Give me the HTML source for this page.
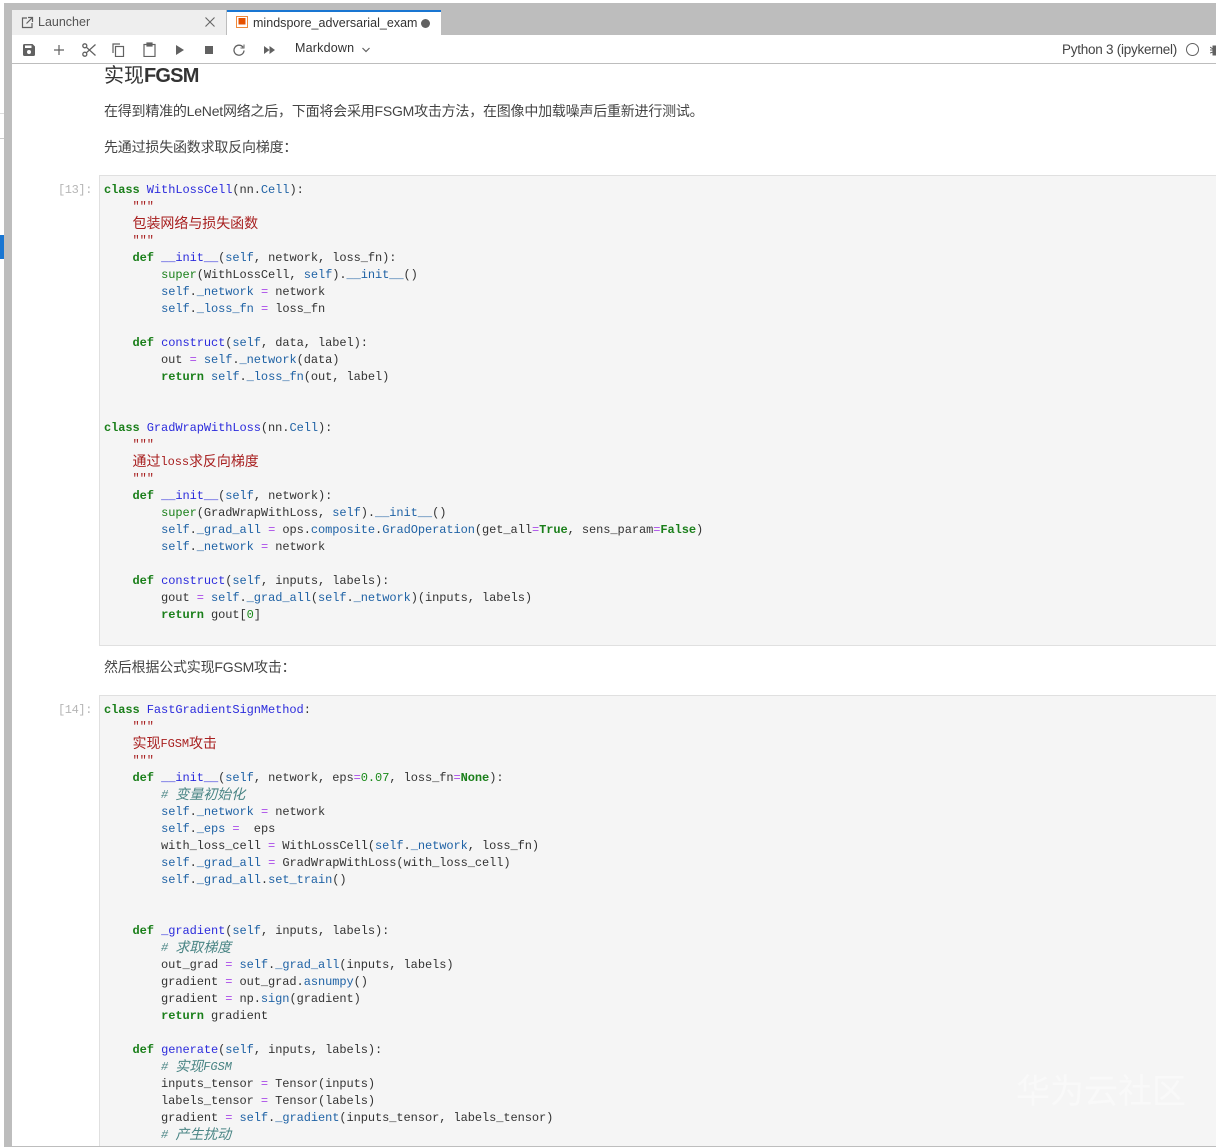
<!DOCTYPE html>
<html><head><meta charset="utf-8"><style>
html,body{margin:0;padding:0;background:#fff}
body{width:1216px;height:1147px;position:relative;overflow:hidden;font-family:"Liberation Sans","Noto Sans CJK SC",sans-serif}
.a{position:absolute}
.code{position:absolute;left:99px;width:1117px;box-sizing:border-box;background:#f5f5f5;border:1px solid #e0e0e0;border-right:0}
.l{position:absolute;left:104px;height:17px;line-height:17px;white-space:pre;font-family:"Liberation Mono","Noto Sans CJK SC",monospace;font-size:12px;letter-spacing:-.07px;color:#333}
.k{color:#1a7f1a;font-weight:bold}.d{color:#2b2bdc}.v{color:#1f62a5}.o{color:#a94be8}.s{color:#a82020}.c{color:#4a8585;font-style:italic}.n{color:#1a8a1a}.b{color:#1a801a}
.z{font-size:14px;letter-spacing:-.05px;position:relative;top:1px}
.p{position:absolute;left:104px;font-size:14px;line-height:20px;color:#444;white-space:pre}
.pr{position:absolute;left:58px;font-family:"Liberation Mono",monospace;font-size:12px;line-height:17px;color:#b5b5b5;letter-spacing:-.4px}
svg{position:absolute}
</style></head><body>
<div class="a" style="left:4px;top:3px;width:1212px;height:32px;background:#bdbdbd"></div>
<div class="a" style="left:4px;top:3px;width:8px;height:1144px;background:#bdbdbd"></div>
<div class="a" style="left:4px;top:1146px;width:1212px;height:1px;background:#bdbdbd"></div>
<div class="a" style="left:0;top:235px;width:4px;height:24px;background:#1976d2"></div>
<div class="a" style="left:0;top:113px;width:4px;height:1px;background:#ddd"></div>
<div class="a" style="left:0;top:138px;width:4px;height:1px;background:#ccc"></div>

<div class="a" style="left:12px;top:10px;width:214px;height:25px;background:#eee"></div>
<div class="a" style="left:227px;top:10px;width:214px;height:25px;background:#fff;border-top:2px solid #1976d2;box-sizing:border-box"></div>
<svg style="left:21px;top:16px" width="13" height="13" viewBox="0 0 13 13" fill="none" stroke="#616161" stroke-width="1.2"><path d="M6 2H1.500v9.500H11V7"/><path d="M7 1.500h4.500V6M11.500 1.500L5.500 7.500"/></svg>
<div class="a" style="left:38px;top:14px;font-size:12.500px;line-height:17px;color:#555">Launcher</div>
<svg style="left:205px;top:17px" width="10" height="10" viewBox="0 0 10 10" stroke="#666" stroke-width="1.100"><path d="M.5.5l9 9M9.500.5l-9 9"/></svg>
<svg style="left:236px;top:16px" width="12" height="12" viewBox="0 0 12 12"><rect x=".5" y=".5" width="11" height="11" fill="#fff" stroke="#ef8a3c"/><path d="M2.500 2h7v6.500H2.500z" fill="#e65100"/></svg>
<div class="a" style="left:253px;top:15px;font-size:12.500px;line-height:17px;color:#333;letter-spacing:.02px">mindspore_adversarial_exam</div>
<div class="a" style="left:421px;top:19px;width:9px;height:9px;border-radius:50%;background:#616161"></div>

<div class="a" style="left:12px;top:35px;width:1204px;height:28px;background:#fff;border-bottom:1px solid #bdbdbd"></div>
<svg style="left:23px;top:44px" width="12" height="12" viewBox="0 0 12 12"><path d="M0 1.500Q0 0 1.500 0H9.500L12 2.500V10.500Q12 12 10.500 12H1.500Q0 12 0 10.500Z" fill="#616161"/><rect x="2" y="1.500" width="6.500" height="2.500" fill="#fff"/><circle cx="6" cy="8" r="2" fill="#fff"/></svg>
<svg style="left:54px;top:45px" width="10" height="10" viewBox="0 0 10 10" stroke="#616161" stroke-width="1.200"><path d="M5 0v10M0 5h10"/></svg>
<svg style="left:82px;top:43px" width="14" height="14" viewBox="0 0 14 14" fill="none" stroke="#616161" stroke-width="1.300"><circle cx="2.800" cy="2.800" r="2"/><circle cx="2.800" cy="11.200" r="2"/><path d="M4.300 4.200L13.500 12.500M4.300 9.800L13.500 1.500"/></svg>
<svg style="left:112px;top:43px" width="13" height="14" viewBox="0 0 13 14" fill="none" stroke="#616161" stroke-width="1.200"><path d="M1 10V1h7"/><rect x="3.500" y="3.500" width="8" height="10"/></svg>
<svg style="left:143px;top:42px" width="13" height="15" viewBox="0 0 13 15" fill="none" stroke="#616161" stroke-width="1.200"><rect x="1" y="2.500" width="11" height="12"/><rect x="4" y="1" width="5" height="3" fill="#616161"/></svg>
<svg style="left:176px;top:45px" width="8" height="10" viewBox="0 0 8 10"><path d="M0 0l8 5-8 5z" fill="#616161"/></svg>
<div class="a" style="left:205px;top:46px;width:8px;height:8px;background:#616161"></div>
<svg style="left:233px;top:44px" width="12" height="12" viewBox="0 0 12 12" fill="none" stroke="#616161" stroke-width="1.300"><path d="M10 3.200A5 5 0 1 0 11 6.500"/><path d="M11 .5v3.500H7.500" stroke-width="1"/></svg>
<svg style="left:264px;top:46px" width="11" height="8" viewBox="0 0 11 8"><path d="M0 0l5.500 4L0 8zM5.500 0L11 4 5.500 8z" fill="#616161"/></svg>
<div class="a" style="left:295px;top:40px;font-size:12.500px;line-height:17px;color:#333;letter-spacing:.2px">Markdown</div>
<svg style="left:362px;top:47px" width="8" height="6" viewBox="0 0 8 6" fill="none" stroke="#616161" stroke-width="1.200"><path d="M.5 1l3.500 3.500L7.500 1"/></svg>
<div class="a" style="left:1062px;top:41px;font-size:13.500px;line-height:17px;color:#444;white-space:pre;letter-spacing:-.25px">Python 3 (ipykernel)</div>
<div class="a" style="left:1186px;top:43px;width:11px;height:11px;border:1px solid #616161;border-radius:50%"></div>
<svg style="left:1210px;top:44px" width="6" height="12" viewBox="0 0 6 12"><path d="M3 2h3v9H3zM0 3l3 2M0 6h3M0 9l3-1" stroke="#616161" fill="#616161"/></svg>

<div class="a" style="left:104px;top:63px;font-size:20px;line-height:26px;color:#333;white-space:pre;font-weight:400">实现<b style="font-weight:600;letter-spacing:-.8px">FGSM</b></div>
<div class="p" style="top:101px;letter-spacing:-.22px">在得到精准的LeNet网络之后，下面将会采用FSGM攻击方法，在图像中加载噪声后重新进行测试。</div>
<div class="p" style="top:137px;letter-spacing:-.2px">先通过损失函数求取反向梯度：</div>
<div class="p" style="top:657px;letter-spacing:-.2px">然后根据公式实现FGSM攻击：</div>

<div class="pr" style="top:182px">[13]:</div>
<div class="pr" style="top:702px">[14]:</div>
<div class="code" style="top:175px;height:471px"></div>
<div class="code" style="top:695px;height:451px;border-bottom:0"></div>

<div class="a" style="left:0;top:1px">
<div class="l" style="top:181px"><span class="k">class</span> <span class="d">WithLossCell</span>(nn.<span class="v">Cell</span>):</div>
<div class="l" style="top:198px"><span class="s">    """</span></div>
<div class="l" style="top:215px"><span class="s">    <span class="z">包装网络与损失函数</span></span></div>
<div class="l" style="top:232px"><span class="s">    """</span></div>
<div class="l" style="top:249px">    <span class="k">def</span> <span class="d">__init__</span>(<span class="v">self</span>, network, loss_fn):</div>
<div class="l" style="top:266px">        <span class="b">super</span>(WithLossCell, <span class="v">self</span>).<span class="v">__init__</span>()</div>
<div class="l" style="top:283px">        <span class="v">self</span>.<span class="v">_network</span> <span class="o">=</span> network</div>
<div class="l" style="top:300px">        <span class="v">self</span>.<span class="v">_loss_fn</span> <span class="o">=</span> loss_fn</div>
<div class="l" style="top:334px">    <span class="k">def</span> <span class="d">construct</span>(<span class="v">self</span>, data, label):</div>
<div class="l" style="top:351px">        out <span class="o">=</span> <span class="v">self</span>.<span class="v">_network</span>(data)</div>
<div class="l" style="top:368px">        <span class="k">return</span> <span class="v">self</span>.<span class="v">_loss_fn</span>(out, label)</div>
<div class="l" style="top:419px"><span class="k">class</span> <span class="d">GradWrapWithLoss</span>(nn.<span class="v">Cell</span>):</div>
<div class="l" style="top:436px"><span class="s">    """</span></div>
<div class="l" style="top:453px"><span class="s">    <span class="z">通过</span>loss<span class="z">求反向梯度</span></span></div>
<div class="l" style="top:470px"><span class="s">    """</span></div>
<div class="l" style="top:487px">    <span class="k">def</span> <span class="d">__init__</span>(<span class="v">self</span>, network):</div>
<div class="l" style="top:504px">        <span class="b">super</span>(GradWrapWithLoss, <span class="v">self</span>).<span class="v">__init__</span>()</div>
<div class="l" style="top:521px">        <span class="v">self</span>.<span class="v">_grad_all</span> <span class="o">=</span> ops.<span class="v">composite</span>.<span class="v">GradOperation</span>(get_all<span class="o">=</span><span class="k">True</span>, sens_param<span class="o">=</span><span class="k">False</span>)</div>
<div class="l" style="top:538px">        <span class="v">self</span>.<span class="v">_network</span> <span class="o">=</span> network</div>
<div class="l" style="top:572px">    <span class="k">def</span> <span class="d">construct</span>(<span class="v">self</span>, inputs, labels):</div>
<div class="l" style="top:589px">        gout <span class="o">=</span> <span class="v">self</span>.<span class="v">_grad_all</span>(<span class="v">self</span>.<span class="v">_network</span>)(inputs, labels)</div>
<div class="l" style="top:606px">        <span class="k">return</span> gout[<span class="n">0</span>]</div>

<div class="l" style="top:701px"><span class="k">class</span> <span class="d">FastGradientSignMethod</span>:</div>
<div class="l" style="top:718px"><span class="s">    """</span></div>
<div class="l" style="top:735px"><span class="s">    <span class="z">实现</span>FGSM<span class="z">攻击</span></span></div>
<div class="l" style="top:752px"><span class="s">    """</span></div>
<div class="l" style="top:769px">    <span class="k">def</span> <span class="d">__init__</span>(<span class="v">self</span>, network, eps<span class="o">=</span><span class="n">0.07</span>, loss_fn<span class="o">=</span><span class="k">None</span>):</div>
<div class="l" style="top:786px"><span class="c">        # <span class="z">变量初始化</span></span></div>
<div class="l" style="top:803px">        <span class="v">self</span>.<span class="v">_network</span> <span class="o">=</span> network</div>
<div class="l" style="top:820px">        <span class="v">self</span>.<span class="v">_eps</span> <span class="o">=</span>  eps</div>
<div class="l" style="top:837px">        with_loss_cell <span class="o">=</span> WithLossCell(<span class="v">self</span>.<span class="v">_network</span>, loss_fn)</div>
<div class="l" style="top:854px">        <span class="v">self</span>.<span class="v">_grad_all</span> <span class="o">=</span> GradWrapWithLoss(with_loss_cell)</div>
<div class="l" style="top:871px">        <span class="v">self</span>.<span class="v">_grad_all</span>.<span class="v">set_train</span>()</div>
<div class="l" style="top:922px">    <span class="k">def</span> <span class="d">_gradient</span>(<span class="v">self</span>, inputs, labels):</div>
<div class="l" style="top:939px"><span class="c">        # <span class="z">求取梯度</span></span></div>
<div class="l" style="top:956px">        out_grad <span class="o">=</span> <span class="v">self</span>.<span class="v">_grad_all</span>(inputs, labels)</div>
<div class="l" style="top:973px">        gradient <span class="o">=</span> out_grad.<span class="v">asnumpy</span>()</div>
<div class="l" style="top:990px">        gradient <span class="o">=</span> np.<span class="v">sign</span>(gradient)</div>
<div class="l" style="top:1007px">        <span class="k">return</span> gradient</div>
<div class="l" style="top:1041px">    <span class="k">def</span> <span class="d">generate</span>(<span class="v">self</span>, inputs, labels):</div>
<div class="l" style="top:1058px"><span class="c">        # <span class="z">实现</span>FGSM</span></div>
<div class="l" style="top:1075px">        inputs_tensor <span class="o">=</span> Tensor(inputs)</div>
<div class="l" style="top:1092px">        labels_tensor <span class="o">=</span> Tensor(labels)</div>
<div class="l" style="top:1109px">        gradient <span class="o">=</span> <span class="v">self</span>.<span class="v">_gradient</span>(inputs_tensor, labels_tensor)</div>
<div class="l" style="top:1126px"><span class="c">        # <span class="z">产生扰动</span></span></div>
</div>

<div class="a" style="left:1016px;top:1072px;font-size:34px;line-height:40px;color:#f9f9f9;white-space:pre">华为云社区</div>
</body></html>
